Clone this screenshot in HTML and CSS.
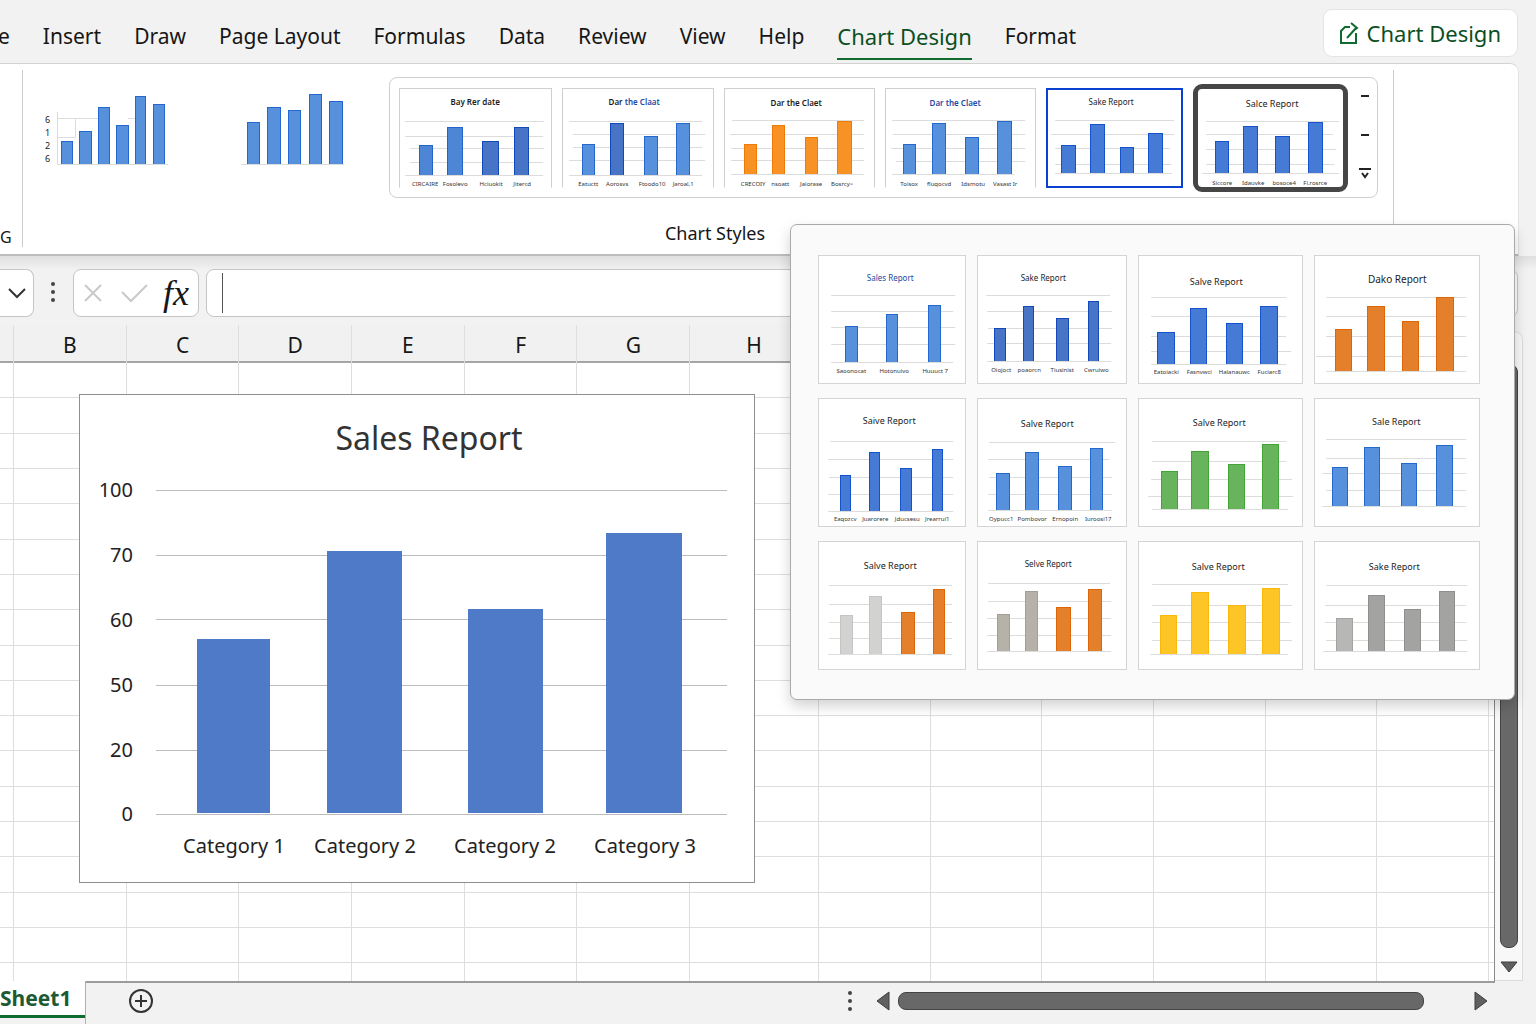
FILE: index.html
```html
<!DOCTYPE html>
<html lang="en">
<head>
    <meta charset="UTF-8">
    <meta name="viewport" content="width=device-width, initial-scale=1.0">
    <title>Sales Report</title>
    <link rel="stylesheet" href="styles.css">
</head>
<body>
    <!-- Menu tabs -->
    <header class="menu">
        <nav class="tabs">
            <a class="tab" href="#">e</a>
            <a class="tab" href="#">Insert</a>
            <a class="tab" href="#">Draw</a>
            <a class="tab" href="#">Page Layout</a>
            <a class="tab" href="#">Formulas</a>
            <a class="tab" href="#">Data</a>
            <a class="tab" href="#">Review</a>
            <a class="tab" href="#">View</a>
            <a class="tab" href="#">Help</a>
            <a class="tab tab-active" href="#">Chart Design</a>
            <a class="tab" href="#">Format</a>
        </nav>
        <button class="design-btn" type="button">
            <svg class="share-icon" width="20" height="24" viewBox="0 0 20 24" aria-hidden="true">
                <path d="M11 6H6L2 10V22H17V12M8 17L17 7M12 2L18 7L14 10"/>
            </svg>
            Chart Design
        </button>
    </header>

    <!-- Ribbon -->
    <section class="ribbon">
        <div class="group-left">G</div>
        <div class="group">
            <div class="group-row">
                <button class="layout-btn" type="button" aria-label="Add chart element">
                    <svg width="126" height="76" viewBox="0 0 126 76">
                        <path class="grid" d="M13.5 20V72.5H124M13 26.5H54M84 26.5H91M13 45.5H31.5V27"/>
                        <path class="bars sky" d="M17.5 72V49.5H28.5V72M35.5 72V39.5H47.5V72M54.5 72V15.5H65.5V72M72.5 72V33.5H84.5V72M91.5 72V4.5H101.5V72M109.5 72V12.5H120.5V72"/>
                        <text class="tick" x="1" y="31">6</text>
                        <text class="tick" x="1" y="44">1</text>
                        <text class="tick" x="1" y="57">2</text>
                        <text class="tick" x="1" y="70">6</text>
                    </svg>
                </button>
                <button class="layout-btn" type="button" aria-label="Quick layout">
                    <svg width="106" height="76" viewBox="0 0 106 76">
                        <path class="grid" d="M0 72.5H103"/>
                        <path class="bars sky" d="M6.5 72V30.5H18.5V72M26.5 72V15.5H39.5V72M47.5 72V18.5H59.5V72M68.5 72V2.5H80.5V72M88.5 72V9.5H101.5V72"/>
                    </svg>
                </button>

                <div class="gallery">
                    <button class="thumb thumb-first" type="button">
                        <svg viewBox="1 1 151 98">
                            <path class="grid" d="M6 33.5H145M6 48.5H144M11 60.5H145M11 74.5H144M6 87.5H144"/>
                            <path class="bars fade" d="M20.5 87V57.5H33.5V87M48.5 87V39.5H63.5V87"/>
                            <path class="bars navy" d="M83.5 87V53.5H99.5V87M115.5 87V39.5H129.5V87"/>
                            <text class="name small strong" x="76" y="17">Bay Rer date</text>
                            <text class="label" x="26" y="98">CIRCAIRE</text>
                            <text class="label" x="56" y="98">Fosolevo</text>
                            <text class="label" x="92" y="98">Hciuokit</text>
                            <text class="label" x="123" y="98">Jitercd</text>
                        </svg>
                    </button>
                    <button class="thumb" type="button">
                        <svg viewBox="1 1 149 98">
                            <path class="grid" d="M7 33.5H140M11 46.5H143M11 59.5H140M7 72.5H143M7 87.5H140"/>
                            <path class="bars sky" d="M20.5 87V56.5H32.5V87M82.5 87V48.5H95.5V87M114.5 87V35.5H127.5V87"/>
                            <path class="bars navy" d="M48.5 87V35.5H61.5V87"/>
                            <text class="name small strong" x="72" y="17">Dar <tspan class="blue-text">the Claat</tspan></text>
                            <text class="label" x="26" y="98">Eatuctt</text>
                            <text class="label" x="55" y="98">Aorosvs</text>
                            <text class="label" x="90" y="98">Ftoodo10</text>
                            <text class="label" x="121" y="98">Jaroal,1</text>
                        </svg>
                    </button>
                    <button class="thumb" type="button">
                        <svg viewBox="1 1 149 98">
                            <path class="grid" d="M8 32.5H140M6 46.5H140M7 60.5H140M7 72.5H140M7 86.5H140"/>
                            <path class="bars amber" d="M20.5 86V56.5H32.5V86M48.5 86V37.5H60.5V86M81.5 86V49.5H93.5V86M113.5 86V33.5H127.5V86"/>
                            <text class="name small strong" x="72" y="18">Dar the Claet</text>
                            <text class="label" x="29" y="98">CRECOIY</text>
                            <text class="label" x="56" y="98">nsoatt</text>
                            <text class="label" x="87" y="98">Jaiorase</text>
                            <text class="label" x="118" y="98">Bosrcy&gt;</text>
                        </svg>
                    </button>
                    <button class="thumb" type="button">
                        <svg viewBox="1 1 149 98">
                            <path class="grid" d="M7 32.5H140M8 46.5H140M6 60.5H140M11 73.5H140M7 86.5H129"/>
                            <path class="bars sky" d="M18.5 86V56.5H30.5V86M47.5 86V35.5H60.5V86M80.5 86V49.5H93.5V86M112.5 86V33.5H126.5V86"/>
                            <text class="name small strong blue-text" x="70" y="18">Dar the Claet</text>
                            <text class="label" x="24" y="98">Toisox</text>
                            <text class="label" x="54" y="98">fluqocvd</text>
                            <text class="label" x="88" y="98">Idsmotu</text>
                            <text class="label" x="120" y="98">Vasast Ir</text>
                        </svg>
                    </button>
                    <button class="thumb thumb-hover" type="button">
                        <svg viewBox="2 2 132 96">
                            <path class="grid" d="M9 32.5H128M5 46.5H128M9 60.5H124M9 76.5H125M9 85.5H126"/>
                            <path class="bars blue" d="M15.5 85V57.5H29.5V85M44.5 85V36.5H58.5V85M74.5 85V59.5H87.5V85M102.5 85V45.5H116.5V85"/>
                            <text class="name small" x="65" y="17">Sake Report</text>
                        </svg>
                    </button>
                    <button class="thumb thumb-current" type="button">
                        <svg viewBox="5 5 145 98">
                            <path class="grid" d="M13 37.5H146M13 50.5H140M13 65.5H143M13 80.5H141M9 89.5H146"/>
                            <path class="bars blue" d="M22.5 89V57.5H35.5V89M50.5 89V42.5H64.5V89M82.5 89V52.5H96.5V89M115.5 89V38.5H129.5V89"/>
                            <text class="name" x="79" y="23">Salce Report</text>
                            <text class="label" x="29" y="101">Siccore</text>
                            <text class="label" x="60" y="101">Idauvke</text>
                            <text class="label" x="91" y="101">bosoce4</text>
                            <text class="label" x="122" y="101">Fi.rosrce</text>
                        </svg>
                    </button>
                    <div class="gallery-nav">
                        <button type="button" aria-label="Previous row"><svg width="12" height="12" viewBox="0 0 12 12"><path d="M2 6H10"/></svg></button>
                        <button type="button" aria-label="Next row"><svg width="12" height="12" viewBox="0 0 12 12"><path d="M2 6H10"/></svg></button>
                        <button type="button" aria-label="More styles"><svg width="14" height="12" viewBox="0 0 14 12"><path d="M1 1H13M4 5L7 9L10 5"/></svg></button>
                    </div>
                </div>
            </div>
            <h2 class="group-title">Chart Styles</h2>
        </div>

        <!-- Expanded style list -->
        <div class="style-menu">
            <button class="card" type="button">
                <svg viewBox="1 1 146 127">
                    <path class="grid" d="M13 40.5H137M13 56.5H135M13 72.5H137M13 89.5H137M13 107.5H135"/>
                    <path class="bars sky" d="M27.5 107V71.5H39.5V107M68.5 107V59.5H79.5V107M110.5 107V50.5H122.5V107"/>
                    <text class="name small blue-text" x="72" y="26">Sales Report</text>
                    <text class="label" x="33" y="118">Saoonocat</text>
                    <text class="label" x="76" y="118">Hotonuivo</text>
                    <text class="label" x="117" y="118">Huuuct 7</text>
                </svg>
            </button>
            <button class="card" type="button">
                <svg viewBox="1 1 147 127">
                    <path class="grid" d="M9 40.5H133M10 56.5H135M11 73.5H135M10 88.5H134M10 106.5H134"/>
                    <path class="bars navy" d="M17.5 106V73.5H28.5V106M46.5 106V51.5H56.5V106M79.5 106V63.5H91.5V106M111.5 106V46.5H121.5V106"/>
                    <text class="name small" x="66" y="26">Sake Report</text>
                    <text class="label" x="24" y="117">Oiojoct</text>
                    <text class="label" x="52" y="117">poaorcn</text>
                    <text class="label" x="85" y="117">Tiusinist</text>
                    <text class="label" x="119" y="117">Cwruiwo</text>
                </svg>
            </button>
            <button class="card" type="button">
                <svg viewBox="1 1 163 127">
                    <path class="grid" d="M13 42.5H148M13 61.5H148M13 81.5H148M13 96.5H153M13 109.5H148"/>
                    <path class="bars blue" d="M19.5 109V77.5H36.5V109M52.5 109V53.5H68.5V109M88.5 109V68.5H104.5V109M122.5 109V51.5H139.5V109"/>
                    <text class="name" x="78" y="30">Salve Report</text>
                    <text class="label" x="28" y="119">Eatoiacki</text>
                    <text class="label" x="61" y="119">Fasnvwci</text>
                    <text class="label" x="96" y="119">Halanauwc</text>
                    <text class="label" x="131" y="119">Fuciarc8</text>
                </svg>
            </button>
            <button class="card" type="button">
                <svg viewBox="1 1 163 127">
                    <path class="grid" d="M12 42.5H152M12 61.5H152M12 81.5H152M2 101.5H153M12 116.5H152"/>
                    <path class="bars orange" d="M21.5 116V74.5H37.5V116M53.5 116V51.5H70.5V116M88.5 116V66.5H104.5V116M122.5 116V42.5H139.5V116"/>
                    <text class="name large" x="83" y="28">Dako Report</text>
                </svg>
            </button>

            <button class="card" type="button">
                <svg viewBox="1 1 146 127">
                    <path class="grid" d="M12 43.5H135M10 61.5H135M11 79.5H135M10 96.5H135M10 113.5H135"/>
                    <path class="bars blue" d="M22.5 113V77.5H32.5V113M51.5 113V54.5H61.5V113M82.5 113V70.5H93.5V113M114.5 113V51.5H124.5V113"/>
                    <text class="name" x="71" y="26">Saive Report</text>
                    <text class="label" x="27" y="123">Eaqozcv</text>
                    <text class="label" x="57" y="123">Juarorere</text>
                    <text class="label" x="89" y="123">Jducsesu</text>
                    <text class="label" x="119" y="123">Jrearrui1</text>
                </svg>
            </button>
            <button class="card" type="button">
                <svg viewBox="1 1 147 127">
                    <path class="grid" d="M12 44.5H138M11 61.5H132M12 79.5H135M11 96.5H135M11 112.5H135"/>
                    <path class="bars sky" d="M19.5 112V75.5H32.5V112M48.5 112V54.5H61.5V112M81.5 112V68.5H94.5V112M113.5 112V50.5H125.5V112"/>
                    <text class="name" x="70" y="29">Salve Report</text>
                    <text class="label" x="24" y="123">Oypucc1</text>
                    <text class="label" x="55" y="123">Pombovor</text>
                    <text class="label" x="88" y="123">Ernopoin</text>
                    <text class="label" x="121" y="123">Iuroosi17</text>
                </svg>
            </button>
            <button class="card" type="button">
                <svg viewBox="1 1 163 127">
                    <path class="grid" d="M14 43.5H148M14 63.5H148M13 81.5H154M10 98.5H155M14 111.5H150"/>
                    <path class="bars green" d="M23.5 111V73.5H39.5V111M53.5 111V53.5H70.5V111M90.5 111V66.5H106.5V111M124.5 111V46.5H140.5V111"/>
                    <text class="name" x="81" y="28">Salve Report</text>
                </svg>
            </button>
            <button class="card" type="button">
                <svg viewBox="1 1 163 127">
                    <path class="grid" d="M12 41.5H152M12 60.5H152M8 75.5H152M12 92.5H152M8 108.5H152"/>
                    <path class="bars sky" d="M18.5 108V69.5H33.5V108M50.5 108V49.5H65.5V108M87.5 108V65.5H102.5V108M122.5 108V47.5H138.5V108"/>
                    <text class="name" x="82" y="27">Sale Report</text>
                </svg>
            </button>

            <button class="card" type="button">
                <svg viewBox="1 1 146 127">
                    <path class="grid" d="M11 44.5H134M11 63.5H134M11 81.5H134M11 97.5H134M10 113.5H134"/>
                    <path class="bars silver" d="M22.5 113V74.5H34.5V113M51.5 113V55.5H63.5V113"/>
                    <path class="bars orange" d="M83.5 113V71.5H96.5V113M115.5 113V48.5H126.5V113"/>
                    <text class="name" x="72" y="28">Salve Report</text>
                </svg>
            </button>
            <button class="card" type="button">
                <svg viewBox="1 1 147 127">
                    <path class="grid" d="M11 42.5H133M11 60.5H134M10 77.5H134M10 94.5H134M10 110.5H134"/>
                    <path class="bars stone" d="M20.5 110V73.5H32.5V110M48.5 110V50.5H60.5V110"/>
                    <path class="bars orange" d="M79.5 110V66.5H93.5V110M111.5 110V48.5H124.5V110"/>
                    <text class="name small" x="71" y="26">Selve Report</text>
                </svg>
            </button>
            <button class="card" type="button">
                <svg viewBox="1 1 163 127">
                    <path class="grid" d="M14 43.5H150M14 64.5H154M14 81.5H152M14 99.5H154M12 113.5H150"/>
                    <path class="bars yellow" d="M22.5 113V74.5H38.5V113M53.5 113V51.5H70.5V113M90.5 113V64.5H107.5V113M124.5 113V47.5H141.5V113"/>
                    <text class="name" x="80" y="29">Salve Report</text>
                </svg>
            </button>
            <button class="card" type="button">
                <svg viewBox="1 1 163 127">
                    <path class="grid" d="M12 44.5H153M11 64.5H152M11 81.5H152M12 99.5H153M9 110.5H153"/>
                    <path class="bars ash" d="M22.5 110V77.5H38.5V110"/>
                    <path class="bars grey" d="M54.5 110V54.5H70.5V110M90.5 110V68.5H106.5V110M125.5 110V50.5H140.5V110"/>
                    <text class="name" x="80" y="29">Sake Report</text>
                </svg>
            </button>
        </div>
    </section>

    <!-- Formula bar -->
    <section class="formula-bar">
        <button class="name-box" type="button" aria-label="Name box">
            <svg width="20" height="12" viewBox="0 0 20 12"><path d="M2 2L10 10L18 2"/></svg>
        </button>
        <div class="dots"><i></i><i></i><i></i></div>
        <div class="formula-tools">
            <button type="button" aria-label="Cancel">
                <svg class="pale" width="20" height="20" viewBox="0 0 20 20"><path d="M2 2L18 18M18 2L2 18"/></svg>
            </button>
            <button type="button" aria-label="Enter">
                <svg class="pale" width="28" height="20" viewBox="0 0 28 20"><path d="M1 9L10 18L26 2"/></svg>
            </button>
            <button class="fx" type="button">fx</button>
        </div>
        <label class="formula-field">
            <span class="caret"></span>
            <input type="text" aria-label="Formula">
        </label>
    </section>

    <!-- Worksheet -->
    <main class="workspace">
        <div class="sheet">
            <div class="columns">
                <div class="column"></div>
                <div class="column">B</div>
                <div class="column">C</div>
                <div class="column">D</div>
                <div class="column">E</div>
                <div class="column">F</div>
                <div class="column">G</div>
                <div class="column">H</div>
                <div class="column"></div>
                <div class="column"></div>
                <div class="column"></div>
                <div class="column"></div>
                <div class="column"></div>
                <div class="column"></div>
                <div class="column"></div>
            </div>
            <div class="rows">
                <div></div><div></div><div></div><div></div><div></div><div></div>
                <div></div><div></div><div></div><div></div><div></div><div></div>
                <div></div><div></div><div></div><div></div><div></div><div></div>
            </div>
            <figure class="chart">
                <svg viewBox="0 0 674 487" role="img" aria-label="Sales Report">
                    <path class="chart-grid" d="M76 95.5H647M76 160.5H647M76 224.5H647M76 290.5H647M76 355.5H647M76 419.5H647"/>
                    <path class="chart-bars" d="M117 418V244H190V418ZM247 418V156H322V418ZM388 418V214H463V418ZM526 418V138H602V418Z"/>
                    <text class="chart-title" x="349" y="55">Sales Report</text>
                    <g class="chart-values">
                        <text x="53" y="102">100</text>
                        <text x="53" y="167">70</text>
                        <text x="53" y="232">60</text>
                        <text x="53" y="297">50</text>
                        <text x="53" y="362">20</text>
                        <text x="53" y="426">0</text>
                    </g>
                    <g class="chart-labels">
                        <text x="154" y="458">Category 1</text>
                        <text x="285" y="458">Category 2</text>
                        <text x="425" y="458">Category 2</text>
                        <text x="565" y="458">Category 3</text>
                    </g>
                </svg>
            </figure>
        </div>
        <div class="v-scroll">
            <div class="v-thumb"></div>
            <button type="button" aria-label="Scroll down">
                <svg width="18" height="12" viewBox="0 0 18 12"><path d="M1 1H17L9 11Z"/></svg>
            </button>
        </div>
    </main>

    <!-- Sheet tabs and horizontal scroll -->
    <footer class="bottom-bar">
        <a class="sheet-tab" href="#">Sheet1</a>
        <div class="bottom-tools">
            <button class="add-btn" type="button" aria-label="New sheet">
                <svg width="26" height="26" viewBox="0 0 26 26"><circle cx="13" cy="13" r="11"/><path d="M13 7V19M7 13H19"/></svg>
            </button>
            <div class="dots"><i></i><i></i><i></i></div>
            <div class="h-scroll">
                <button type="button" aria-label="Scroll left">
                    <svg width="14" height="20" viewBox="0 0 14 20"><path d="M13 1V19L1 10Z"/></svg>
                </button>
                <div class="h-track"><div class="h-thumb"></div></div>
                <button type="button" aria-label="Scroll right">
                    <svg width="14" height="20" viewBox="0 0 14 20"><path d="M1 1V19L13 10Z"/></svg>
                </button>
            </div>
        </div>
    </footer>
</body>
</html>
```
FILE: styles.css
```css
* {
    margin: 0;
    padding: 0;
    box-sizing: border-box;
}

body {
    display: flex;
    flex-direction: column;
    min-height: 100vh;
    font-family: "Noto Sans", "Open Sans", sans-serif;
    background-color: #f3f2f2;
    color: #161616;
}

button {
    border: none;
    background: none;
    font-family: inherit;
    color: inherit;
    cursor: pointer;
}

svg {
    display: block;
}

a {
    color: inherit;
    text-decoration: none;
}

/* Menu */
.menu {
    display: flex;
    justify-content: space-between;
    align-items: flex-start;
    height: 63px;
    padding-right: 18px;
}

.tabs {
    display: flex;
    gap: 33px;
    margin-left: -2px;
    padding-top: 18px;
}

.tab {
    height: 42px;
    line-height: 36px;
    font-size: 21px;
    white-space: nowrap;
}

.tab-active {
    color: #0b4f1f;
    font-size: 22px;
    border-bottom: 2px solid #0f6b2f;
}

.design-btn {
    display: flex;
    align-items: center;
    gap: 8px;
    height: 48px;
    margin-top: 9px;
    padding: 0 16px 0 15px;
    border: 1px solid #e4e4e4;
    border-radius: 9px;
    background-color: #fff;
    color: #0b4f1f;
    font-size: 22px;
}

.share-icon {
    fill: none;
    stroke: #0f6b2f;
    stroke-width: 2;
}

/* Ribbon */
.ribbon {
    position: relative;
    display: flex;
    height: 193px;
    margin-right: 17px;
    padding-top: 6px;
    background-color: #fff;
    border-top: 1px solid #d2d2d2;
    border-right: 1px solid #e2e2e2;
    border-bottom: 2px solid #bdbdbd;
    border-top-right-radius: 9px;
}

.group-left {
    width: 23px;
    height: 177px;
    padding-top: 155px;
    border-right: 1px solid #c9cccf;
    font-size: 16px;
    line-height: 24px;
}

.group {
    flex: 1;
    margin-right: 124px;
    padding: 7px 15px 0 21px;
    border-right: 1px solid #c9cccf;
}

.group-row {
    display: flex;
    align-items: flex-start;
}

.layout-btn {
    padding-top: 15px;
    margin-right: 71px;
}

.layout-btn + .layout-btn {
    margin-right: 42px;
}

.gallery {
    display: flex;
    flex: 1;
    align-items: center;
    gap: 10px;
    height: 121px;
    padding: 0 5px 0 9px;
    border: 1px solid #cfcfcf;
    border-radius: 8px;
}

.thumb {
    flex: 149;
    height: 100px;
    border: 1px solid #cfcfcf;
    border-bottom-color: #fff;
    background-color: #fff;
}

.thumb svg,
.card svg {
    width: 100%;
    height: 100%;
}

.thumb-first {
    flex: 151;
}

.thumb-hover {
    flex: 132;
    border: 2px solid #0a41d0;
}

.thumb-current {
    flex: 145;
    height: 108px;
    border: 5px solid #464646;
    border-radius: 9px;
}

.gallery-nav {
    display: flex;
    flex-direction: column;
    align-items: center;
    justify-content: space-between;
    height: 90px;
    width: 14px;
    margin-bottom: 5px;
}

.gallery-nav svg {
    fill: none;
    stroke: #222;
    stroke-width: 2;
}

.group-title {
    padding: 22px 0 0 8px;
    font-size: 18px;
    font-weight: 400;
    line-height: 26px;
    text-align: center;
}

/* Small chart drawings */
.grid {
    fill: none;
    stroke: #dcdcdc;
}

.bars {
    shape-rendering: crispEdges;
}

.sky { fill: #5791dc; stroke: #2468cf; }
.blue { fill: #457bd4; stroke: #1552cd; }
.navy { fill: #4874c6; stroke: #1349ba; }
.fade { fill: #4e86d6; stroke: #2064cc; }
.amber { fill: #f89224; stroke: #f07a08; }
.orange { fill: #e47f2b; stroke: #dd6608; }
.green { fill: #67b45d; stroke: #41a535; }
.yellow { fill: #fec526; stroke: #fbb80c; }
.silver { fill: #d2d2d0; stroke: #c4c4c2; }
.stone { fill: #b6b2aa; stroke: #a39f98; }
.ash { fill: #b7b7b6; stroke: #a3a3a2; }
.grey { fill: #a3a3a2; stroke: #8f8f8e; }

.name {
    font-size: 9px;
    text-anchor: middle;
    fill: #1c1c1c;
}

.small {
    font-size: 8px;
}

.large {
    font-size: 10px;
}

.strong {
    font-weight: 600;
}

.blue-text {
    fill: #1c4aa5;
}

.label {
    font-size: 6px;
    text-anchor: middle;
    fill: #333;
}

.tick {
    font-size: 9px;
    fill: #222;
}

/* Expanded style list */
.style-menu {
    position: absolute;
    top: 160px;
    right: 3px;
    z-index: 2;
    display: grid;
    grid-template-columns: 148fr 149fr 165fr 165fr;
    gap: 14px 11px;
    width: 725px;
    padding: 30px 34px 29px 27px;
    border: 1px solid #a9a9a9;
    border-radius: 7px;
    background-color: #fafafa;
    box-shadow: 0 6px 14px rgba(0, 0, 0, 0.18);
}

.card {
    height: 129px;
    border: 1px solid #d4d4d4;
    background-color: #fff;
}

/* Formula bar */
.formula-bar {
    display: flex;
    align-items: flex-start;
    height: 69px;
    padding: 13px 18px 0 0;
    background: linear-gradient(#dfdfdf, #f2f2f2 14px);
}

.formula-bar svg {
    fill: none;
    stroke: #333;
    stroke-width: 2;
}

.formula-bar .pale {
    stroke: #c9c9c9;
}

.name-box,
.formula-tools,
.formula-field {
    display: flex;
    align-items: center;
    height: 48px;
    border: 1px solid #c6c6c6;
    border-radius: 8px;
    background-color: #fff;
}

.name-box {
    width: 34px;
    padding-left: 7px;
    border-left: none;
    border-radius: 0 8px 8px 0;
}

.dots {
    display: flex;
    flex-direction: column;
    gap: 4px;
}

.dots i {
    width: 4px;
    height: 4px;
    border-radius: 50%;
    background-color: #444;
}

.formula-bar .dots {
    margin: 13px 18px 0 17px;
}

.formula-tools {
    gap: 18px;
    width: 126px;
    padding-left: 9px;
    margin-right: 7px;
}

.formula-tools .fx {
    margin-left: -4px;
    font-family: "Liberation Serif", serif;
    font-size: 36px;
    font-style: italic;
    line-height: 40px;
}

.formula-field {
    flex: 1;
    padding-left: 15px;
}

.caret {
    width: 1px;
    height: 40px;
    background-color: #555;
}

.formula-field input {
    flex: 1;
    height: 40px;
    padding-left: 6px;
    border: none;
    outline: none;
    background: none;
    font-size: 20px;
}

/* Worksheet */
.workspace {
    display: flex;
    flex: 1;
    padding-right: 13px;
}

/* Columns, rows and the chart share one grid area */
.sheet {
    display: grid;
    grid-template-rows: 38px 1fr;
    flex: 1;
    border-right: 1px solid #8a8a8a;
    background: linear-gradient(#f1f1f1 36px, #a6a6a6 36px, #a6a6a6 38px, #fff 38px);
}

.columns {
    grid-area: 1 / 1 / 3 / 2;
    display: grid;
    grid-template-columns: 14px repeat(6, 113fr) 129fr repeat(6, 112fr) 5px;
}

.column {
    border-right: 1px solid #dedede;
    font-size: 21px;
    line-height: 40px;
    text-align: center;
}

.column:last-child {
    border-right: none;
}

.rows {
    grid-area: 2 / 1 / 3 / 2;
    display: grid;
    grid-template-rows: repeat(17, 2fr) 1fr;
}

.rows div {
    border-bottom: 1px solid #dedede;
}

.rows div:last-child {
    border-bottom: none;
}

.chart {
    grid-area: 2 / 1 / 3 / 2;
    align-self: start;
    width: 676px;
    margin: 31px 0 0 79px;
    border: 1px solid #8f8f8f;
    background-color: #fff;
}

.chart-grid {
    fill: none;
    stroke: #bcbcbc;
}

.chart-bars {
    fill: #4f7ac8;
}

.chart text {
    font-size: 20px;
    text-anchor: middle;
    fill: #222;
}

.chart .chart-title {
    font-size: 32px;
    fill: #333;
}

.chart .chart-values text {
    text-anchor: end;
}

.v-scroll {
    display: flex;
    flex-direction: column;
    align-items: center;
    gap: 13px;
    width: 28px;
    margin-top: 6px;
    padding: 32px 0 7px;
    border: 1px solid #dcdcdc;
    border-left: none;
    border-top-right-radius: 9px;
    background-color: #f8f8f8;
}

.v-thumb {
    flex: 1;
    width: 18px;
    border: 1px solid #444;
    border-radius: 8px;
    background-color: #686868;
}

.v-scroll svg,
.h-scroll svg {
    fill: #606060;
    stroke: #3c3c3c;
}

/* Bottom bar */
.bottom-bar {
    display: flex;
    height: 43px;
}

.sheet-tab {
    width: 85px;
    height: 37px;
    border-bottom: 3px solid #0f6b2f;
    background-color: #fff;
    color: #1c5a34;
    font-size: 21px;
    font-weight: 700;
    line-height: 34px;
}

/* The top line stops where the sheet ends */
.bottom-tools {
    display: flex;
    flex: 1;
    align-items: center;
    padding: 0 48px 3px 42px;
    border-left: 1px solid #b0b0b0;
    background: linear-gradient(#9c9c9c, #9c9c9c) no-repeat 0 0 / calc(100% - 41px) 2px;
}

.add-btn {
    margin-right: auto;
}

.add-btn svg {
    fill: none;
    stroke: #333;
    stroke-width: 2;
}

.h-scroll {
    display: flex;
    align-items: center;
    width: 45%;
    margin-left: 24px;
}

.h-track {
    flex: 1;
    padding: 0 50px 0 8px;
}

.h-thumb {
    height: 18px;
    border: 1px solid #444;
    border-radius: 8px;
    background-color: #686868;
}
```
